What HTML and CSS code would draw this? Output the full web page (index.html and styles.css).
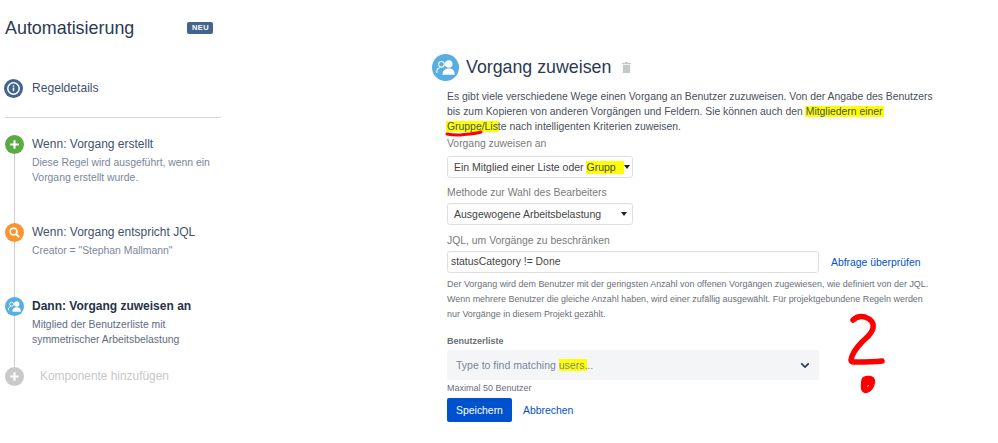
FILE: index.html
```html
<!DOCTYPE html>
<html lang="de">
<head>
<meta charset="utf-8">
<title>Automatisierung</title>
<link rel="stylesheet" href="styles.css">
</head>
<body>
<div class="page">
  <aside class="sidebar">
    <div class="brand"><h1>Automatisierung</h1><span class="badge">NEU</span></div>
    <div class="details">
      <span class="dot dot-navy"><svg viewBox="0 0 20 20"><circle cx="10" cy="10" r="6" fill="none" stroke="#fff" stroke-width="1.6"/><path d="M10 9v4M10 6.6v1.2" stroke="#fff" stroke-width="1.6"/></svg></span>
      <span class="details-label">Regeldetails</span>
    </div>
    <hr class="rule">
    <ol class="steps">
      <li class="step step-a">
        <span class="dot dot-green"><svg viewBox="0 0 20 20"><path d="M10 5.500v9M5.500 10h9" stroke="#fff" stroke-width="2.200"/></svg></span>
        <div><div class="step-title">Wenn: Vorgang erstellt</div><p class="step-text">Diese Regel wird ausgeführt, wenn ein Vorgang erstellt wurde.</p></div>
      </li>
      <li class="step step-b">
        <span class="dot dot-orange"><svg viewBox="0 0 20 20"><circle cx="9" cy="9" r="3.600" fill="none" stroke="#fff" stroke-width="1.800"/><path d="M11.600 11.600l3.400 3.400" stroke="#fff" stroke-width="2"/></svg></span>
        <div><div class="step-title">Wenn: Vorgang entspricht JQL</div><p class="step-text">Creator = "Stephan Mallmann"</p></div>
      </li>
      <li class="step step-c">
        <span class="dot dot-blue"><svg viewBox="0 0 20 20"><circle cx="12.400" cy="7.400" r="2.800" fill="#fff"/><path d="M7.800 15.400c0-3.400 2-4.600 4.600-4.600s4.400 1.200 4.400 4.600z" fill="#fff"/><circle cx="7" cy="7.600" r="2.100" fill="none" stroke="#fff"/><path d="M3.600 14v-1c0-1.600 1-2.600 2.400-2.800" fill="none" stroke="#fff"/></svg></span>
        <div><div class="step-title step-title-strong">Dann: Vorgang zuweisen an</div><p class="step-text step-text-dark">Mitglied der Benutzerliste mit symmetrischer Arbeitsbelastung</p></div>
      </li>
      <li class="step step-add">
        <span class="dot dot-grey"><svg viewBox="0 0 20 20"><path d="M10 5.500v9M5.500 10h9" stroke="#fff" stroke-width="2.200"/></svg></span>
        <div class="add-label">Komponente hinzufügen</div>
      </li>
    </ol>
  </aside>
  <main class="panel">
    <header class="panel-head">
      <span class="head-icon"><svg viewBox="0 0 20 20"><circle cx="12.400" cy="7.400" r="2.800" fill="#fff"/><path d="M7.800 15.400c0-3.400 2-4.600 4.600-4.600s4.400 1.200 4.400 4.600z" fill="#fff"/><circle cx="7" cy="7.600" r="2.100" fill="none" stroke="#fff" stroke-width=".8"/><path d="M3.600 14v-1c0-1.600 1-2.600 2.400-2.800" fill="none" stroke="#fff" stroke-width=".8"/></svg></span>
      <h2>Vorgang zuweisen</h2>
      <svg class="trash" viewBox="0 0 10 12"><path d="M3.500 0h3v1H10v1.400H0V1h3.500zM1 3.200h8V12H1z" fill="#c4c7cc"/></svg>
    </header>
    <div class="form">
      <p class="intro">Es gibt viele verschiedene Wege einen Vorgang an Benutzer zuzuweisen. Von der Angabe des Benutzers bis zum Kopieren von anderen Vorgängen und Feldern. Sie können auch den <mark class="hl hl-marker">Mitgliedern einer</mark> <mark class="hl hl-marker">Gruppe/Lis</mark>te nach intelligenten Kriterien zuweisen.</p>
      <div class="label label-first">Vorgang zuweisen an</div>
      <div class="select select-a"><span>Ein Mitglied einer Liste oder <mark class="hl hl-box">Grupp</mark></span><i class="caret"></i></div>
      <div class="label">Methode zur Wahl des Bearbeiters</div>
      <div class="select"><span>Ausgewogene Arbeitsbelastung</span><i class="caret"></i></div>
      <div class="label label-jql">JQL, um Vorgänge zu beschränken</div>
      <div class="jql-row">
        <div class="input">statusCategory != Done</div>
        <a class="link" href="#">Abfrage überprüfen</a>
      </div>
      <p class="help">Der Vorgang wird dem Benutzer mit der geringsten Anzahl von offenen Vorgängen zugewiesen, wie definiert von der JQL. Wenn mehrere Benutzer die gleiche Anzahl haben, wird einer zufällig ausgewählt. Für projektgebundene Regeln werden nur Vorgänge in diesem Projekt gezählt.</p>
      <div class="field-label">Benutzerliste</div>
      <div class="picker">
        <span>Type to find matching <mark class="hl">users.</mark>..</span>
        <svg class="chevron" viewBox="0 0 12 8"><path d="M1.500 1.500L6 6l4.500-4.500" fill="none" stroke="#253858" stroke-width="2"/></svg>
      </div>
      <div class="hint">Maximal 50 Benutzer</div>
      <div class="actions"><button class="btn" type="button">Speichern</button><a class="link" href="#">Abbrechen</a></div>
    </div>
  </main>
</div>
<svg class="scribble-under" viewBox="0 0 40 10"><path d="M3 6C8 7 14 7.500 20 6.500C26 6 32 5.500 37 4" fill="none" stroke="#f00" stroke-width="3" stroke-linecap="round"/></svg>
<svg class="scribble-two" viewBox="0 0 60 90"><path d="M13 11C16 8 21 7 25 8C31 10 34 14 33 19C32 25 27 28 22 33C17 38 12 45 11 51C11 53 13 53 16 53C25 53 34 53 42 52" fill="none" stroke="#f00" stroke-width="5.500" stroke-linecap="round" stroke-linejoin="round"/><path d="M23 68C27 66 34 66 35 71C36 76 32 83 27 84C22 85 20 80 21 75C21 72 21 70 23 68z" fill="#f00"/><path d="M27 77l2-1-1 2z" fill="#fff"/></svg>
</body>
</html>
```
FILE: styles.css
```css
* { box-sizing: border-box; }
html, body { margin: 0; padding: 0; background: #fff; }
body {
  width: 998px;
  height: 443px;
  overflow: hidden;
  position: relative;
  font-family: "Liberation Sans", Arial, sans-serif;
  color: #42526e;
}
h1, h2, p, ol { margin: 0; padding: 0; }
mark { color: inherit; }
.page { display: flex; align-items: flex-start; }

.sidebar { width: 216px; margin-left: 5px; padding-top: 17px; flex: none; }
.brand { display: flex; align-items: center; justify-content: space-between; height: 22px; padding-right: 8px; }
.brand h1 { font-size: 17.900px; font-weight: 400; color: #2a3a52; }
.badge {
  background: #43648c; color: #fff; font-size: 7.500px; font-weight: 700;
  line-height: 12px; padding: 0 4px 0 5px; border-radius: 2px; letter-spacing: .4px;
}
.details { display: flex; align-items: center; gap: 9px; margin-top: 39px; margin-left: -1px; height: 20px; }
.details-label { font-size: 12.100px; color: #42526e; }
.dot {
  width: 19px; height: 19px; border-radius: 50%; flex: none; display: block;
  position: relative; z-index: 1;
}
.dot svg { display: block; width: 100%; height: 100%; }
.dot-navy { background: #43648c; }
.dot-green { background: #5aab44; }
.dot-orange { background: #fb942d; }
.dot-blue { background: #56aee3; }
.dot-grey { background: #c9c9c9; }
.rule { border: 0; border-top: 1px solid #d8d8d8; margin: 19px 0 0; }

.steps { list-style: none; margin-top: 17px; }
.step { display: flex; gap: 8px; position: relative; }
.step::before {
  content: ""; position: absolute; left: 9px; top: 10px; bottom: -4px;
  width: 1px; background: #cfcfcf;
}
.step-add::before { display: none; }
.step-a { height: 88px; }
.step-b { height: 74px; }
.step-c { height: 70px; }
.step-title { font-size: 12px; line-height: 18px; color: #42526e; }
.step-title-strong { font-weight: 700; color: #253247; }
.step-text { font-size: 10.400px; line-height: 15px; margin-top: 2px; color: #7a869a; width: 190px; }
.step-text-dark { color: #5e6c84; }
.add-label { font-size: 11.900px; line-height: 19px; color: #c7c7c7; margin-left: 8px; }

.panel { margin-left: 211px; padding-top: 54px; width: 520px; flex: none; }
.panel-head { display: flex; align-items: center; height: 27px; }
.head-icon { width: 27px; height: 27px; border-radius: 50%; background: #56aee3; flex: none; }
.head-icon svg { display: block; width: 100%; height: 100%; }
.panel-head h2 { font-size: 17.800px; font-weight: 400; color: #2a3a52; margin-left: 7px; }
.trash { width: 9px; height: 11px; margin-left: 11px; }
.form { margin-left: 15px; width: 490px; }
.intro { font-size: 10.400px; line-height: 15px; color: #4a4f5a; margin-top: 8px; width: 490px; }
.hl { background: #ffff00; }
.hl-marker { box-shadow: -1px 0 0 #ffff00, 1px 0 0 #ffff00; }
.hl-box { display: inline-block; width: 38px; height: 13px; line-height: 13px; margin-left: -1px; padding-left: 1px; }
.label { font-size: 10.400px; line-height: 14px; color: #7a7a7a; margin-top: 8px; }
.label-first { margin-top: 3px; }
.label-jql { margin-top: 9px; }
.select {
  display: flex; align-items: center; justify-content: space-between;
  width: 186px; height: 22px; margin-top: 3px; padding: 0 5px 0 6px;
  border: 1px solid #dfdfdf; border-radius: 3px; background: #fff;
  font-size: 10.500px; color: #444;
}
.select-a { margin-top: 5px; }
.select span { white-space: nowrap; }
.caret { width: 0; height: 0; border: 3px solid transparent; border-top: 4px solid #222; border-bottom: 0; }
.jql-row { display: flex; align-items: center; margin-top: 3px; }
.input {
  width: 372px; height: 22px; line-height: 20px; padding-left: 3px;
  border: 1px solid #dfdfdf; border-radius: 3px; font-size: 10.400px; color: #444;
}
.link { color: #0052cc; text-decoration: none; font-size: 10.400px; margin-left: 12px; }
.help { font-size: 8.950px; line-height: 15px; color: #6b6f78; margin-top: 4px; width: 490px; }
.field-label { font-size: 9px; font-weight: 700; line-height: 12px; color: #6b6f78; margin-top: 13px; }
.picker {
  display: flex; align-items: center; justify-content: space-between;
  width: 372px; height: 30px; margin-top: 3px; padding: 0 9px;
  background: #f4f5f7; border-radius: 3px; font-size: 10.500px; color: #7a869a;
}
.chevron { width: 10px; height: 7px; }
.hint { font-size: 9px; line-height: 12px; color: #6b6f78; margin-top: 2px; }
.actions { display: flex; align-items: center; margin-top: 4px; }
.btn {
  width: 65px; height: 24px; padding: 0; border: 0; border-radius: 2px;
  background: #0052cc; color: #fff; font: 400 10.400px "Liberation Sans", Arial, sans-serif;
}
.actions .link { margin-left: 11px; }
.scribble-under { position: absolute; left: 444px; top: 128px; width: 40px; height: 10px; }
.scribble-two { position: absolute; left: 840px; top: 309px; width: 60px; height: 90px; }
```
